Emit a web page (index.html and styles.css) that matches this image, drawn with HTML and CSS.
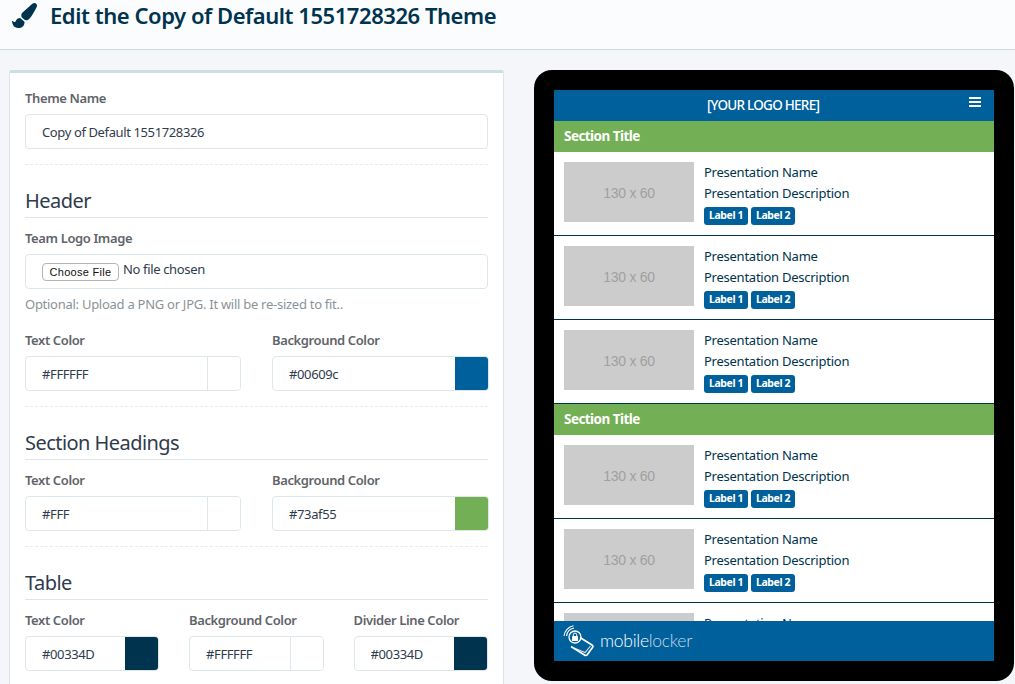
FILE: index.html
```html
<!DOCTYPE html>
<html lang="en">
<head>
<meta charset="utf-8">
<title>Edit Theme</title>
<link rel="stylesheet" href="styles.css">
</head>
<body>
<header class="topbar">
  <svg class="brush" viewBox="0 0 512 512"><path d="M167.02 309.34c-40.12 2.58-76.53 17.86-97.19 72.3-2.35 6.21-8 9.98-14.59 9.98-11.11 0-45.46-27.67-55.25-34.35C0 439.62 37.93 512 128 512c75.86 0 128-43.77 128-120.19 0-3.11-.65-6.08-.97-9.13l-88.01-73.34zM457.89 0c-15.16 0-29.37 6.71-40.21 16.45C213.27 199.05 192 203.34 192 257.09c0 13.7 3.25 26.76 8.73 38.7l63.82 53.18c7.21 1.8 14.64 3.03 22.39 3.03 62.11 0 98.11-45.47 211.16-256.46 7.38-14.35 13.9-29.85 13.9-45.99C512 20.64 486 0 457.89 0z"/></svg>
  <h1 class="title">Edit the Copy of Default 1551728326 Theme</h1>
</header>
<main class="content">
  <form class="card">
    <div class="field">
      <label class="label">Theme Name</label>
      <input class="input" type="text" value="Copy of Default 1551728326">
    </div>
    <hr class="dash">
    <h2 class="section">Header</h2>
    <div class="field">
      <label class="label">Team Logo Image</label>
      <div class="filebox"><span class="filebtn">Choose File</span><span class="filetext">No file chosen</span></div>
      <p class="help">Optional: Upload a PNG or JPG. It will be re-sized to fit..</p>
    </div>
    <div class="cols two">
      <div class="color"><label class="label">Text Color</label><div class="group"><input class="ginput" value="#FFFFFF"><span class="swatch white"></span></div></div>
      <div class="color"><label class="label">Background Color</label><div class="group"><input class="ginput" value="#00609c"><span class="swatch blue"></span></div></div>
    </div>
    <hr class="dash">
    <h2 class="section">Section Headings</h2>
    <div class="cols two">
      <div class="color"><label class="label">Text Color</label><div class="group"><input class="ginput" value="#FFF"><span class="swatch white"></span></div></div>
      <div class="color"><label class="label">Background Color</label><div class="group"><input class="ginput" value="#73af55"><span class="swatch green"></span></div></div>
    </div>
    <hr class="dash">
    <h2 class="section">Table</h2>
    <div class="cols three">
      <div class="color"><label class="label">Text Color</label><div class="group"><input class="ginput" value="#00334D"><span class="swatch navy"></span></div></div>
      <div class="color"><label class="label">Background Color</label><div class="group"><input class="ginput" value="#FFFFFF"><span class="swatch white"></span></div></div>
      <div class="color"><label class="label">Divider Line Color</label><div class="group"><input class="ginput" value="#00334D"><span class="swatch navy"></span></div></div>
    </div>
  </form>
  <aside class="device">
    <div class="screen">
      <div class="appbar"><span class="applogo">[YOUR LOGO HERE]</span><span class="burger"><i></i><i></i><i></i></span></div>
      <div class="list">
        <div class="sect">Section Title</div>
        <div class="row"><div class="thumb">130 x 60</div><div class="info"><div class="name">Presentation Name</div><div class="name">Presentation Description</div><div class="tags"><span class="tag">Label 1</span><span class="tag">Label 2</span></div></div></div>
        <div class="row"><div class="thumb">130 x 60</div><div class="info"><div class="name">Presentation Name</div><div class="name">Presentation Description</div><div class="tags"><span class="tag">Label 1</span><span class="tag">Label 2</span></div></div></div>
        <div class="row"><div class="thumb">130 x 60</div><div class="info"><div class="name">Presentation Name</div><div class="name">Presentation Description</div><div class="tags"><span class="tag">Label 1</span><span class="tag">Label 2</span></div></div></div>
        <div class="sect">Section Title</div>
        <div class="row"><div class="thumb">130 x 60</div><div class="info"><div class="name">Presentation Name</div><div class="name">Presentation Description</div><div class="tags"><span class="tag">Label 1</span><span class="tag">Label 2</span></div></div></div>
        <div class="row"><div class="thumb">130 x 60</div><div class="info"><div class="name">Presentation Name</div><div class="name">Presentation Description</div><div class="tags"><span class="tag">Label 1</span><span class="tag">Label 2</span></div></div></div>
        <div class="row"><div class="thumb">130 x 60</div><div class="info"><div class="name">Presentation Name</div><div class="name">Presentation Description</div><div class="tags"><span class="tag">Label 1</span><span class="tag">Label 2</span></div></div></div>
      </div>
      <div class="appfoot">
        <svg class="mlicon" viewBox="0 0 32 32" fill="none" stroke="#fff">
          <path d="M17 12.5 L29 20 Q30.5 21 29.5 22.5 L24 30 Q23 31 21.5 30 L8 21.5" stroke-width="1.7" stroke-linejoin="round"/>
          <path d="M11 23 L22 27.5 L27.5 21" stroke-width="1.1" opacity=".85"/>
          <circle cx="12" cy="12" r="6" stroke-width="1.3"/>
          <rect x="9" y="11" width="6" height="5" rx=".6" fill="#fff" stroke="none"/>
          <path d="M10.3 11 V9.8 a1.7 1.7 0 0 1 3.4 0 V11" stroke-width="1"/>
          <path d="M3.6 11 A9 9 0 0 1 11 3" stroke-width="1.2"/>
          <path d="M1 11 A11.5 11.5 0 0 1 10.5 .8" stroke-width="1.1"/>
        </svg>
        <span class="wordmark">mobile<span class="wordlight">locker</span></span>
      </div>
    </div>
  </aside>
</main>
</body>
</html>
```
FILE: styles.css
```css
* { box-sizing: border-box; }
html, body { margin: 0; height: 684px; overflow: hidden; }
body { background: #f5f6fa; font-family: "Noto Sans", "Liberation Sans", sans-serif; color: #2f3b4c; }

.topbar { height: 50px; background: #fbfcfe; border-bottom: 1px solid #ced9e0; display: flex; align-items: flex-start; padding: 3px 0 0 12px; }
.brush { width: 25px; height: 25px; fill: #00334d; flex: none; }
.title { margin: -3px 0 0 13px; font-size: 22px; line-height: 30px; font-weight: 600; color: #00334d; letter-spacing: -.45px; white-space: nowrap; }

.content { display: flex; align-items: flex-start; padding: 20px 0 0 9px; }

.card { width: 495px; flex: none; background: #fff; border: 1px solid #dbe4ea; border-top: 3px solid #cddde5; border-radius: 3px; padding: 17px 15px 15px; }
.field { display: flex; flex-direction: column; }
.color { display: flex; flex-direction: column; }
.label { font-size: 13px; line-height: 16px; font-weight: 600; color: #5f6469; margin-bottom: 8px; letter-spacing: -.38px; white-space: nowrap; }
.input { height: 35px; width: 100%; border: 1px solid #dde6eb; border-radius: 4px; padding: 0 16px; font: 13px "Noto Sans", sans-serif; color: #2f3b4c; letter-spacing: -.38px; background: #fff; outline: none; }
.dash { border: 0; border-top: 1px dashed #e6ebee; margin: 15px 0 0; }
.section { margin: 23px 0 12px; padding-bottom: 3px; border-bottom: 1px solid #dfe5e9; font-size: 20px; line-height: 26px; font-weight: 400; color: #2f3b4c; letter-spacing: -.55px; }

.filebox { height: 35px; border: 1px solid #dde6eb; border-radius: 4px; display: flex; align-items: flex-start; padding: 8px 0 0 16px; font-size: 13px; line-height: 14px; color: #2f3b4c; }
.filebtn { height: 18px; width: 77px; margin-right: 4px; border: 1px solid #b5b5b5; border-radius: 4px; background: #fff; font: 11px/16px "Liberation Sans", sans-serif; color: #111; text-align: center; letter-spacing: .3px; }
.filetext { margin-top: -1px; letter-spacing: -.35px; }
.help { margin: 6px 0 0; font-size: 13px; line-height: 18px; color: #8b9297; letter-spacing: -.27px; }

.cols { display: grid; }
.two { grid-template-columns: 216px 216.5px; column-gap: 31px; margin-top: 19px; }
.section + .two { margin-top: 0; }
.three { grid-template-columns: 134px 134.5px 134px; column-gap: 30px; }
.group { height: 35px; display: flex; border: 1px solid #dde6eb; border-radius: 4px; overflow: hidden; background: #fff; }
.ginput { flex: 1; min-width: 0; border: 0; padding: 0 16px; font: 13px "Noto Sans", sans-serif; color: #2f3b4c; letter-spacing: -.38px; outline: none; background: transparent; }
.swatch { width: 33px; flex: none; border-left: 1px solid #dde6eb; }
.white { background: #fff; }
.blue { background: #00609c; border-left: 0; }
.green { background: #73af55; border-left: 0; }
.navy { background: #00334d; border-left: 0; }

.device { width: 480px; height: 611px; flex: none; margin-left: 30px; background: #000; border-radius: 18px; padding: 20px; }
.screen { height: 571px; display: flex; flex-direction: column; background: #fff; overflow: hidden; }
.appbar { height: 31px; flex: none; background: #00609c; color: #fff; position: relative; display: flex; align-items: center; justify-content: center; padding: 0 22px 2px 0; }
.applogo { font-size: 13.5px; font-weight: 500; letter-spacing: -.75px; white-space: nowrap; }
.burger { position: absolute; right: 13px; top: 7px; width: 12px; display: flex; flex-direction: column; gap: 2px; }
.burger i { display: block; height: 2px; background: #fff; }
.list { flex: 1; min-height: 0; overflow: hidden; }
.sect { height: 31px; background: #73af55; color: #fff; font-size: 13.5px; line-height: 30px; font-weight: 700; padding-left: 10px; letter-spacing: -.55px; }
.row { height: 84px; padding: 10px; display: flex; border-bottom: 1px solid #00334d; background: #fff; }
.thumb { width: 130px; height: 60px; flex: none; background: #ccc; color: #a0a0a0; font: 14px/63px "Liberation Sans", sans-serif; text-align: center; letter-spacing: -.3px; }
.info { margin-left: 10px; }
.name { font-size: 13px; line-height: 21px; color: #00334d; letter-spacing: -.25px; white-space: nowrap; }
.tags { display: flex; gap: 3px; margin-top: 3px; }
.tag { width: 44px; height: 18px; background: #00609c; color: #fff; border-radius: 3px; font-size: 10.5px; line-height: 17px; font-weight: 700; text-align: center; letter-spacing: -.4px; }
.appfoot { height: 40px; flex: none; background: #00609c; display: flex; align-items: center; padding-left: 9px; }
.mlicon { width: 32px; height: 32px; flex: none; }
.wordmark { margin-left: 5px; font: 300 17.5px/1 Lato, sans-serif; color: #fff; letter-spacing: -.27px; white-space: nowrap; }
.wordlight { color: #c6d9e6; }
```
